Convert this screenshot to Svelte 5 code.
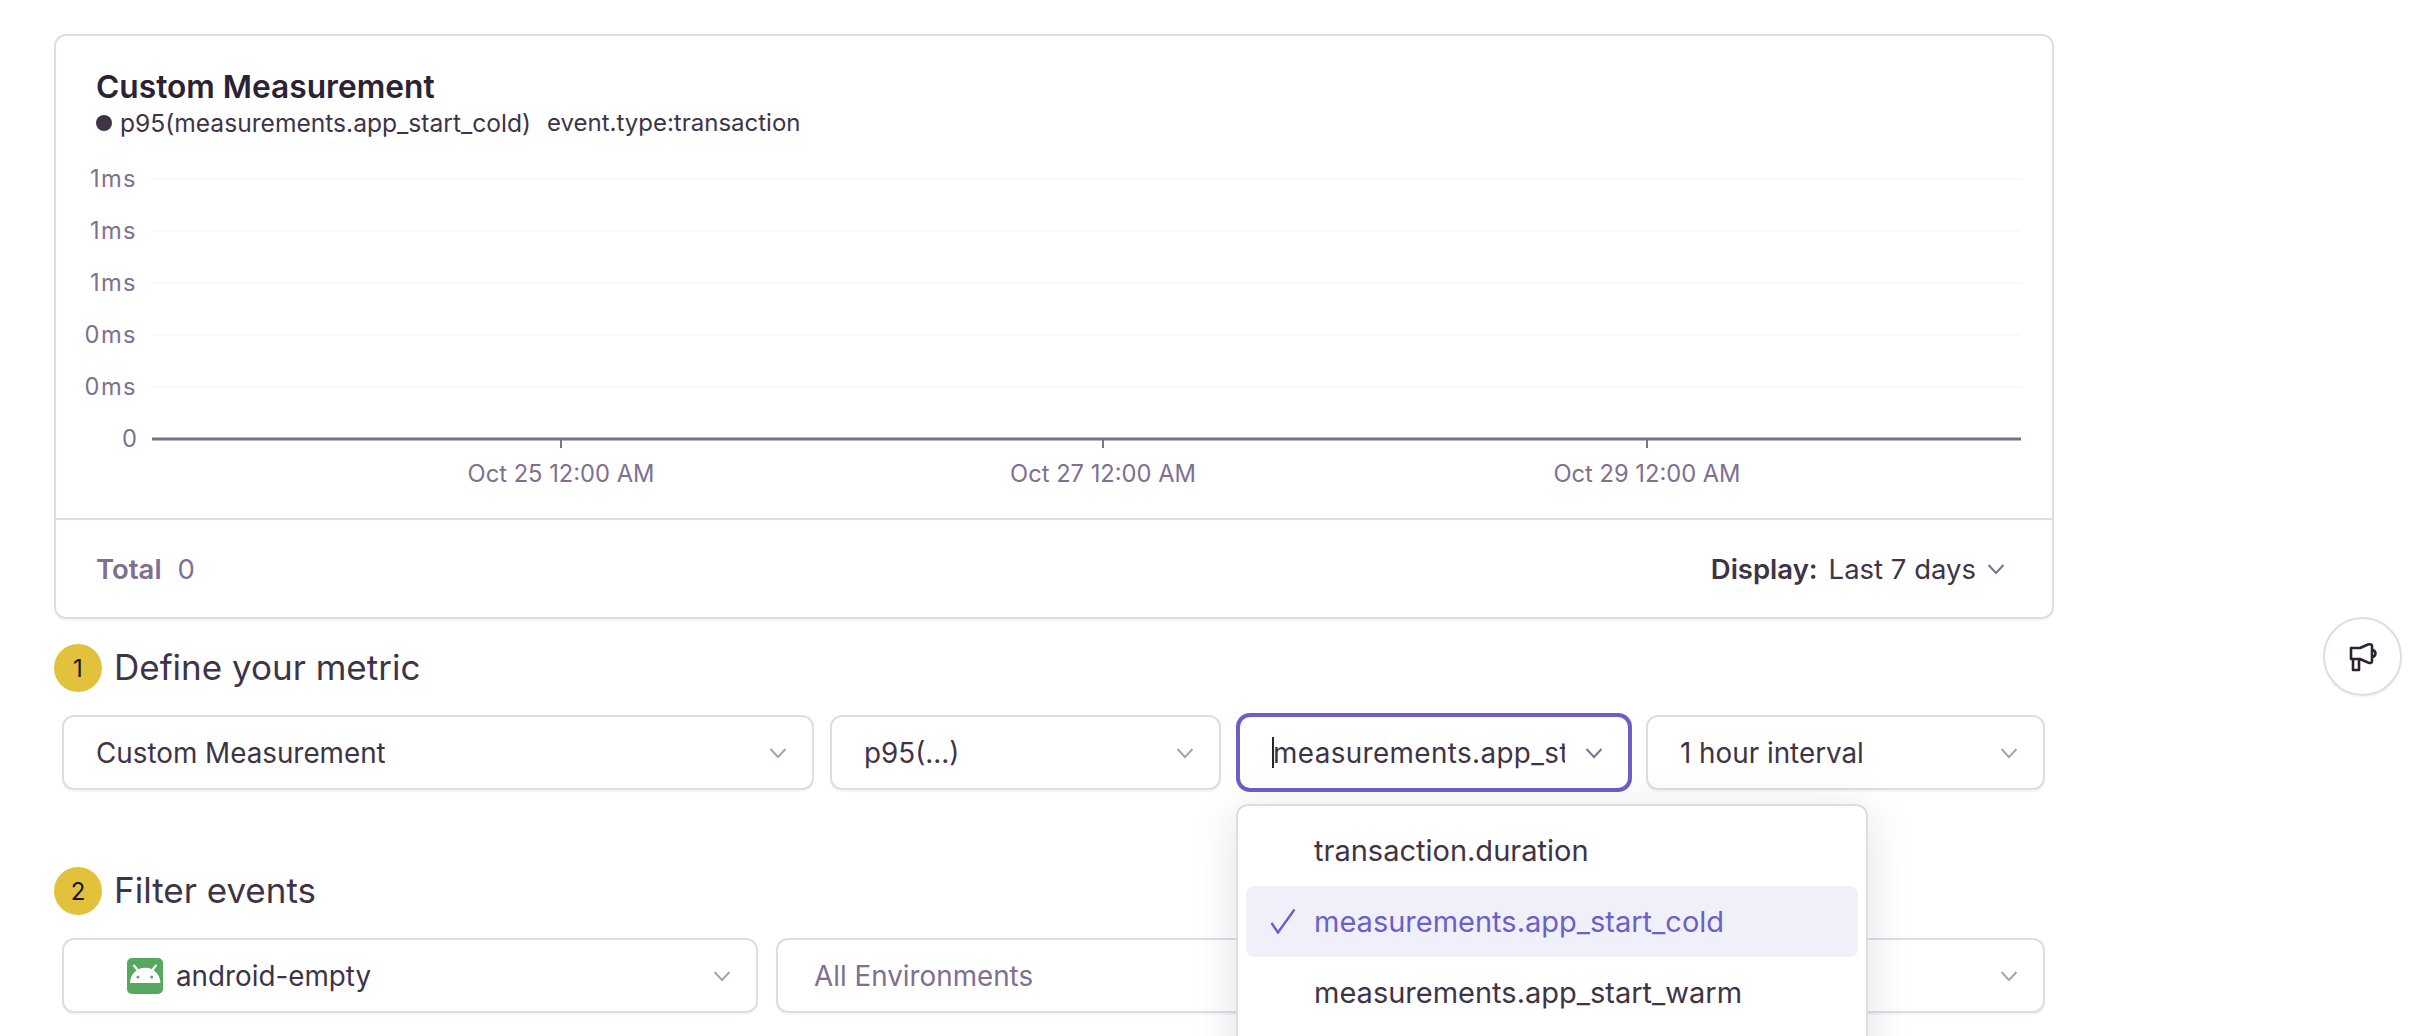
<script lang="ts">
  const yTicks = [
    { label: "1ms", y: 179 },
    { label: "1ms", y: 231 },
    { label: "1ms", y: 283 },
    { label: "0ms", y: 335 },
    { label: "0ms", y: 387 },
  ];
  const xTicks = [
    { label: "Oct 25 12:00 AM", x: 561 },
    { label: "Oct 27 12:00 AM", x: 1103 },
    { label: "Oct 29 12:00 AM", x: 1647 },
  ];
  const options = [
    { label: "transaction.duration", selected: false },
    { label: "measurements.app_start_cold", selected: true },
    { label: "measurements.app_start_warm", selected: false },
  ];
</script>

{#snippet chevron()}
  <svg class="chevron" viewBox="0 0 18 12" aria-hidden="true">
    <path d="M1.5 2 L9 10 L16.5 2" />
  </svg>
{/snippet}

<main class="page">
  <section class="card">
    <header class="card-head">
      <h1>Custom Measurement</h1>
      <div class="legend">
        <span class="dot"></span>
        <span>p95(measurements.app_start_cold)</span>
        <span class="query">event.type:transaction</span>
      </div>
    </header>

    <!-- svg origin is the page, shifted so coordinates read like the screenshot -->
    <svg class="plot" viewBox="56 146 1996 372">
      {#each yTicks as tick}
        <line class="grid" x1="152" x2="2021" y1={tick.y} y2={tick.y} />
        <text class="axis y-label" x="137" y={tick.y + 8} text-anchor="end">{tick.label}</text>
      {/each}
      <text class="axis" x="137" y="447" text-anchor="end">0</text>
      <line class="base" x1="152" x2="2021" y1="439" y2="439" />
      {#each xTicks as tick}
        <line class="tick" x1={tick.x} x2={tick.x} y1="439" y2="448" />
        <text class="axis" x={tick.x} y="482" text-anchor="middle">{tick.label}</text>
      {/each}
    </svg>

    <footer class="card-foot">
      <div class="total"><b>Total</b><span>0</span></div>
      <div class="display">
        <b>Display:</b>
        <span>Last 7 days</span>
        {@render chevron()}
      </div>
    </footer>
  </section>

  <h2 class="step"><span class="num">1</span><span class="step-title">Define your metric</span></h2>
  <div class="row metric-row">
    <div class="select"><span class="value">Custom Measurement</span>{@render chevron()}</div>
    <div class="select"><span class="value">p95(…)</span>{@render chevron()}</div>
    <div class="select focused">
      <span class="caret"></span>
      <span class="value">measurements.app_start_cold</span>
      {@render chevron()}
      <div class="menu">
        {#each options as option}
          <div class="option" class:selected={option.selected}>
            {#if option.selected}
              <svg class="check" viewBox="0 0 26 26" aria-hidden="true">
                <path d="M1.5 15 L8 24.5 L24.5 1.5" />
              </svg>
            {/if}
            <span>{option.label}</span>
          </div>
        {/each}
      </div>
    </div>
    <div class="select"><span class="value">1 hour interval</span>{@render chevron()}</div>
  </div>

  <h2 class="step second"><span class="num">2</span><span class="step-title">Filter events</span></h2>
  <div class="row filter-row">
    <div class="select project">
      <svg class="android" viewBox="0 0 36 36" aria-hidden="true">
        <rect width="36" height="36" rx="5" fill="#57a85f" />
        <path d="M3 25 A15.2 15.2 0 0 1 33.4 25 Z" fill="#fff" />
        <path d="M7 7.5 L11.5 13 M29 7.5 L24.5 13" stroke="#fff" stroke-width="2" stroke-linecap="round" />
        <circle cx="11" cy="19" r="1.5" fill="#57a85f" />
        <circle cx="24.7" cy="19" r="1.5" fill="#57a85f" />
      </svg>
      <span class="value">android-empty</span>
      {@render chevron()}
    </div>
    <div class="select"><span class="value muted">All Environments</span>{@render chevron()}</div>
    <div class="select"><span class="value"></span>{@render chevron()}</div>
  </div>

  <button class="feedback" aria-label="Give feedback">
    <svg viewBox="0 0 32 32" aria-hidden="true">
      <path d="M4 7 H13 L21 3.5 Q25 2.5 25 5 V20 Q25 23 21 21.5 L13 18 H4 Z M25 9 A3.5 3.5 0 0 1 25 16 M6 18 V29 H12 V19" />
    </svg>
  </button>
</main>

<style>
  :global(body) {
    background: #fff;
    color: #3e3446;
    font-family: Inter, "Liberation Sans", sans-serif;
    height: 1036px;
    overflow: hidden;
  }

  .page {
    box-sizing: border-box;
    height: 1036px;
    overflow: hidden;
    padding: 34px 0 0 54px;
    position: relative;
    width: 2430px;
  }

  .card {
    border: 2px solid #e0dce5;
    border-radius: 12px;
    box-shadow: 0 2px 0 rgba(37, 11, 54, 0.04);
    box-sizing: border-box;
    height: 585px;
    width: 2000px;
  }

  .card-head {
    box-sizing: border-box;
    height: 110px;
    padding: 34px 0 0 40px;
  }

  h1 {
    color: #2b2233;
    font-size: 31.7px;
    font-weight: 600;
    line-height: 34px;
    margin: 0;
  }

  .legend {
    align-items: center;
    display: flex;
    font-size: 24.6px;
    line-height: 30px;
    margin-top: 4px;
  }

  .dot {
    background: #3e3446;
    border-radius: 50%;
    height: 16px;
    margin-right: 8px;
    width: 16px;
  }

  .query {
    font-size: 24px;
    margin-left: 16px;
  }

  .plot {
    display: block;
    height: 372px;
    width: 1996px;
  }

  .grid {
    stroke: #f9f8fa;
    stroke-width: 2;
  }

  .base {
    stroke: #7a6e8a;
    stroke-width: 3;
  }

  .tick {
    stroke: #80708f;
    stroke-width: 2;
  }

  .axis {
    fill: #80708f;
    font-size: 23.7px;
  }

  .y-label {
    letter-spacing: 1.4px;
  }

  .card-foot {
    align-items: center;
    border-top: 2px solid #e0dce5;
    box-sizing: border-box;
    display: flex;
    font-size: 27.5px;
    height: 99px;
    justify-content: space-between;
    padding: 0 47px 0 40px;
  }

  .total {
    color: #80708f;
    display: flex;
    gap: 16px;
  }

  .total b,
  .display b {
    font-weight: 600;
  }

  .display {
    align-items: center;
    display: flex;
    gap: 11px;
  }

  .step {
    align-items: center;
    color: #3e3446;
    display: flex;
    font-size: 35px;
    font-weight: 400;
    gap: 12px;
    height: 48px;
    margin: 25px 0 23px;
  }

  .step.second {
    margin-top: 77px;
  }

  .step-title {
    margin-top: -3px;
  }

  .num {
    align-items: center;
    background: #e2c13c;
    border-radius: 50%;
    color: #1d1127;
    display: flex;
    font-size: 24px;
    height: 48px;
    justify-content: center;
    width: 48px;
  }

  .row {
    display: flex;
    gap: 16px;
    margin-left: 8px;
    width: 1984px;
  }

  .select {
    align-items: center;
    background: #fff;
    border: 2px solid #e0dce5;
    border-radius: 12px;
    box-shadow: 0 2px 0 rgba(37, 11, 54, 0.04);
    box-sizing: border-box;
    display: flex;
    font-size: 27.8px;
    height: 75px;
    padding: 0 25px 0 32px;
    position: relative;
  }

  .metric-row .select:nth-child(1) {
    width: 752px;
  }

  .metric-row .select:nth-child(2) {
    width: 391px;
  }

  .metric-row .select:nth-child(3) {
    margin-left: 1px;
    width: 392px;
  }

  .metric-row .select:nth-child(4) {
    width: 399px;
  }

  .filter-row .select:nth-child(1) {
    width: 696px;
  }

  .filter-row .select:nth-child(2) {
    margin-left: 2px;
    padding-left: 36px;
    width: 693px;
  }

  .filter-row .select:nth-child(3) {
    width: 560px;
  }

  .value {
    flex: 1;
    min-width: 0;
    overflow: hidden;
    white-space: nowrap;
  }

  .muted {
    color: #80708f;
  }

  .chevron {
    fill: none;
    flex: none;
    height: 12px;
    stroke: #a9a1b5;
    stroke-width: 2;
    width: 18px;
  }

  .display .chevron,
  .focused > .chevron {
    stroke: #80708f;
  }

  .focused {
    border-color: #6c5fc7;
    box-shadow: 0 0 0 2px #6c5fc7;
    padding-left: 33px;
  }

  .focused > .value {
    letter-spacing: 0.4px;
    margin-right: 20px;
  }

  .caret {
    background: #2b2233;
    height: 31px;
    left: 32px;
    position: absolute;
    top: 20px;
    width: 2px;
  }

  .menu {
    background: #fff;
    border: 2px solid #e0dce5;
    border-radius: 12px;
    box-shadow: 0 8px 48px rgba(37, 11, 54, 0.12);
    box-sizing: border-box;
    font-size: 29px;
    height: 300px;
    left: -4px;
    padding: 9px 8px 0;
    position: absolute;
    top: 87px;
    width: 632px;
    z-index: 2;
  }

  .option {
    align-items: center;
    border-radius: 8px;
    display: flex;
    height: 71px;
    padding-left: 68px;
    position: relative;
  }

  .selected {
    background: #f0f0fa;
    color: #6c5fc7;
  }

  .check {
    fill: none;
    height: 26px;
    left: 24px;
    position: absolute;
    stroke: #6c5fc7;
    stroke-width: 2.4;
    top: 22px;
    width: 26px;
  }

  .project {
    padding-left: 63px;
  }

  .android {
    flex: none;
    height: 36px;
    margin-right: 13px;
    width: 36px;
  }

  .feedback {
    align-items: center;
    background: #fff;
    border: 2px solid #e0dce5;
    border-radius: 50%;
    box-shadow: 0 2px 0 rgba(37, 11, 54, 0.04);
    display: flex;
    height: 79px;
    justify-content: center;
    left: 2323px;
    padding: 0;
    position: absolute;
    top: 617px;
    width: 79px;
  }

  .feedback svg {
    fill: none;
    height: 32px;
    stroke: #2b2233;
    stroke-linejoin: round;
    stroke-width: 2.6;
    width: 32px;
  }
</style>
